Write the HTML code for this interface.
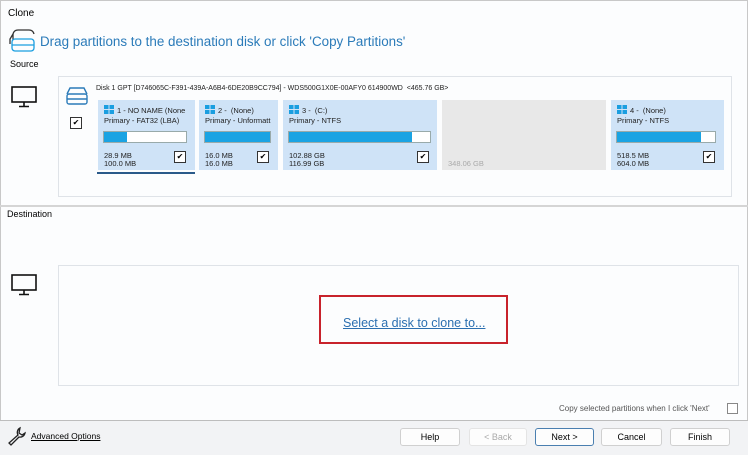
<!DOCTYPE html>
<html><head><style>
*{margin:0;padding:0;box-sizing:border-box}
body{width:748px;height:455px;background:#fcfdfe;font-family:"Liberation Sans",sans-serif;position:relative;overflow:hidden;color:#000}
.a{position:absolute}
.t{font-size:9px;white-space:nowrap}
.box{border:1px solid #dfe3e8;background:#fcfdfe}
.part{background:#cfe3f7}
.bar{position:absolute;left:5px;right:6px;height:12px;top:31px;background:#fff;border:1px solid #9aa;}
.bar i{display:block;height:100%;background:#1aa3e3}
.cb{position:absolute;width:12px;height:12px;border:1px solid #333;background:#fff;font-size:8px;line-height:10px;text-align:center}
.pt{font-size:7.5px;line-height:8px;color:#222;position:absolute;left:6px;white-space:nowrap}
.win{display:inline-block;width:10px;height:9px;vertical-align:-1px;margin-right:3px;background:linear-gradient(90deg,transparent 4.5px,#cfe3f7 4.5px,#cfe3f7 5.5px,transparent 5.5px),linear-gradient(transparent 4px,#cfe3f7 4px,#cfe3f7 5px,transparent 5px),#1a9ee0}
.btn{position:absolute;top:428px;height:18px;border:1px solid #d0d0d0;background:#fdfdfd;border-radius:3px;font-size:9px;text-align:center;line-height:16px}
</style></head><body>
<div class="a" style="left:0;top:0;right:0;bottom:0;border:1px solid #c8c8c8"></div>
<div class="a t" style="left:8px;top:8px;font-size:10px">Clone</div>
<svg class="a" style="left:9px;top:28px" width="28" height="26" viewBox="0 0 28 26" fill="none" stroke="#333" stroke-width="1.3"><path d="M4 6 Q5 2 9 2 H20 Q24 2 25 6"/><path d="M4 6 V12 M1 16 V11 L4 6"/><rect x="3" y="11" width="22" height="12" rx="3" stroke="#1a9ee0"/><path d="M3 17 H25" stroke="#1a9ee0"/></svg>
<div class="a" style="left:40px;top:34px;font-size:13.4px;color:#2b7bb9;white-space:nowrap">Drag partitions to the destination disk or click 'Copy Partitions'</div>
<div class="a t" style="left:10px;top:59px">Source</div>
<svg class="a" style="left:11px;top:86px" width="26" height="22" viewBox="0 0 26 22" fill="none" stroke="#111" stroke-width="1.6"><rect x="1" y="1" width="24" height="15"/><path d="M13 16 V20 M8 20.5 H18"/></svg>
<div class="a box" style="left:58px;top:76px;width:674px;height:121px"></div>
<svg class="a" style="left:65px;top:86px" width="24" height="20" viewBox="0 0 24 20" fill="none" stroke="#2b7bb9" stroke-width="1.4"><path d="M2 8 L5 2 H19 L22 8"/><rect x="2" y="8" width="20" height="10" rx="2"/><path d="M2 13 H22"/></svg>
<div class="a" style="left:96px;top:85px;font-size:7px;white-space:nowrap;color:#222">Disk 1 GPT [D746065C-F391-439A-A6B4-6DE20B9CC794] - WDS500G1X0E-00AFY0 614900WD&nbsp; &lt;465.76 GB&gt;</div>
<div class="cb" style="left:70px;top:117px">✔</div>

<div class="a part" style="left:98px;top:100px;width:97px;height:70px"><div class="pt" style="top:5px"><span class="win"></span>1 - NO NAME (None</div><div class="pt" style="top:17px">Primary - FAT32 (LBA)</div><div class="bar" style="right:8px"><i style="width:28%"></i></div><div class="pt" style="top:52px">28.9 MB<br>100.0 MB</div><div class="cb" style="left:76px;top:51px">✔</div></div>
<div class="a" style="left:97px;top:172px;width:98px;height:2px;background:#2a5a8a"></div>
<div class="a part" style="left:199px;top:100px;width:79px;height:70px"><div class="pt" style="top:5px"><span class="win"></span>2 -&nbsp; (None)</div><div class="pt" style="top:17px">Primary - Unformatt</div><div class="bar" style="right:7px"><i style="width:100%"></i></div><div class="pt" style="top:52px">16.0 MB<br>16.0 MB</div><div class="cb" style="left:58px;top:51px">✔</div></div>
<div class="a part" style="left:283px;top:100px;width:154px;height:70px"><div class="pt" style="top:5px"><span class="win"></span>3 -&nbsp; (C:)</div><div class="pt" style="top:17px">Primary - NTFS</div><div class="bar" style="right:6px"><i style="width:87%"></i></div><div class="pt" style="top:52px">102.88 GB<br>116.99 GB</div><div class="cb" style="left:134px;top:51px">✔</div></div>
<div class="a" style="left:442px;top:100px;width:164px;height:70px;background:#e8e8e8"><div class="pt" style="top:60px;color:#aaa">348.06 GB</div></div>
<div class="a part" style="left:611px;top:100px;width:113px;height:70px"><div class="pt" style="top:5px"><span class="win"></span>4 -&nbsp; (None)</div><div class="pt" style="top:17px">Primary - NTFS</div><div class="bar" style="right:8px"><i style="width:86%"></i></div><div class="pt" style="top:52px">518.5 MB<br>604.0 MB</div><div class="cb" style="left:92px;top:51px">✔</div></div>

<div class="a" style="left:0;top:205px;width:748px;height:2px;background:#d5d5d5"></div>
<div class="a t" style="left:7px;top:209px">Destination</div>
<svg class="a" style="left:11px;top:274px" width="26" height="22" viewBox="0 0 26 22" fill="none" stroke="#111" stroke-width="1.6"><rect x="1" y="1" width="24" height="15"/><path d="M13 16 V20 M8 20.5 H18"/></svg>
<div class="a box" style="left:58px;top:265px;width:681px;height:121px"></div>
<div class="a" style="left:319px;top:295px;width:189px;height:49px;border:2px solid #c8232c"></div>
<div class="a" style="left:343px;top:316px;font-size:12.5px;color:#2b6fb0;text-decoration:underline;white-space:nowrap">Select a disk to clone to...</div>
<div class="a" style="left:559px;top:404px;font-size:8px;color:#555;white-space:nowrap">Copy selected partitions when I click 'Next'</div>
<div class="a" style="left:727px;top:403px;width:11px;height:11px;border:1px solid #888;background:#fff"></div>

<div class="a" style="left:0;top:420px;width:748px;height:35px;background:#f2f3f5;border-top:1px solid #bdbdbd"></div>
<svg class="a" style="left:7px;top:426px" width="20" height="20" viewBox="0 0 20 20" fill="none" stroke="#222" stroke-width="1.3"><path d="M13 2 A5 5 0 0 0 11 9 L2 17 L4 19 L12 11 A5 5 0 0 0 18 7 L15 9 L12 7 Z"/></svg>
<div class="a" style="left:31px;top:431px;font-size:8.5px;text-decoration:underline;white-space:nowrap">Advanced Options</div>
<div class="btn" style="left:400px;width:60px">Help</div>
<div class="btn" style="left:469px;width:58px;color:#aaa;border-color:#e4e4e4">&lt; Back</div>
<div class="btn" style="left:535px;width:59px;border:1px solid #4a7fb0">Next &gt;</div>
<div class="btn" style="left:601px;width:61px">Cancel</div>
<div class="btn" style="left:670px;width:60px">Finish</div>
</body></html>
